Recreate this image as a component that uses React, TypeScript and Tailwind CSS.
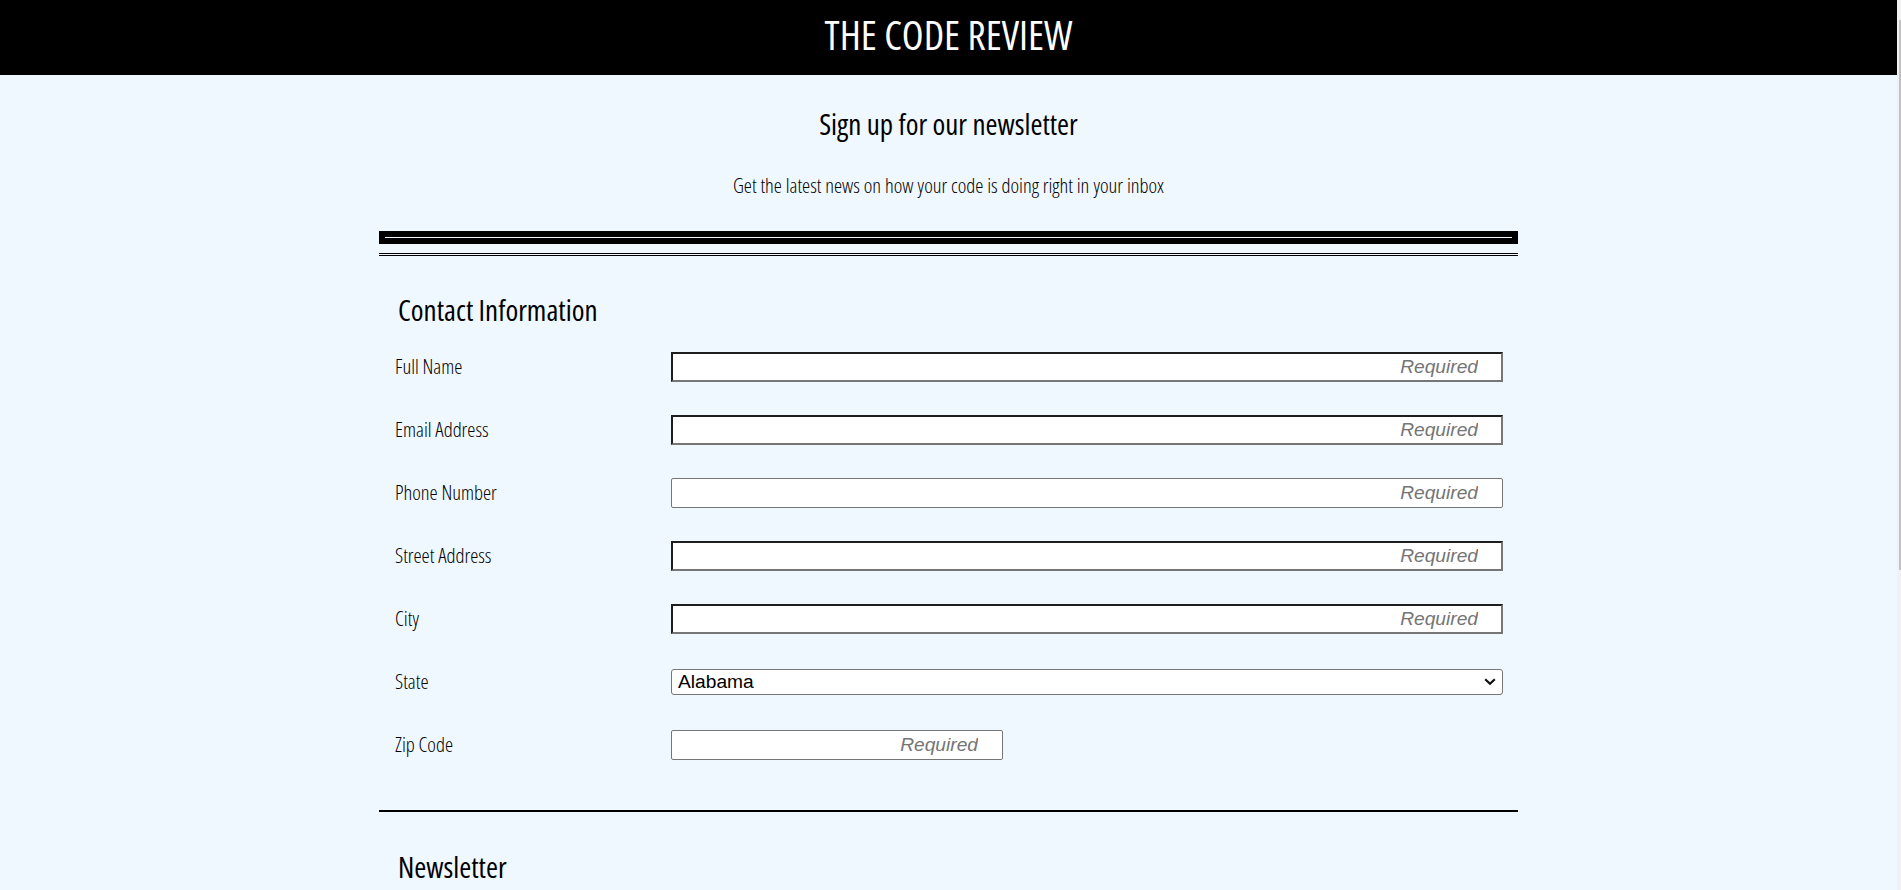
import type { ReactNode } from "react";

const condensed = "font-['Open_Sans',sans-serif] [font-stretch:75%]";

type Field = {
  label: string;
  kind: "strict" | "soft" | "select" | "zip";
};

const fields: Field[] = [
  { label: "Full Name", kind: "strict" },
  { label: "Email Address", kind: "strict" },
  { label: "Phone Number", kind: "soft" },
  { label: "Street Address", kind: "strict" },
  { label: "City", kind: "strict" },
  { label: "State", kind: "select" },
  { label: "Zip Code", kind: "zip" },
];

const states = ["Alabama", "Alaska", "Arizona", "Arkansas", "California", "Colorado"];

function Row({ label, children }: { label: string; children: ReactNode }) {
  return (
    <div className="flex h-[63px] items-center">
      <label className={`${condensed} w-[292px] shrink-0 pl-[16px] text-[20.5px] font-light text-black`}>
        {label}
      </label>
      <div className="w-[832px]">{children}</div>
    </div>
  );
}

function FieldInput({ kind }: { kind: Field["kind"] }) {
  const base =
    "h-[30px] bg-white font-['Liberation_Sans',Arial,sans-serif] text-[19.2px] text-right text-black outline-none placeholder:italic placeholder:text-[#757575]";

  if (kind === "select") {
    return (
      <div className="relative">
        <select className="h-[26px] w-full appearance-none rounded-[3px] border border-[#767676] bg-white pl-[6px] font-['Liberation_Sans',Arial,sans-serif] text-[19.2px] leading-[24px] text-black">
          {states.map((s) => (
            <option key={s}>{s}</option>
          ))}
        </select>
        <svg
          className="pointer-events-none absolute right-[7px] top-[9px]"
          width="12"
          height="8"
          viewBox="0 0 12 8"
        >
          <path d="M1.2 1.2 L6 5.8 L10.8 1.2" fill="none" stroke="#111" strokeWidth="2.2" />
        </svg>
      </div>
    );
  }

  if (kind === "strict") {
    return (
      <input
        required
        placeholder="Required"
        className={`${base} w-full border-2 border-t-[#1e1e1e] border-l-[#1e1e1e] border-r-[#767676] border-b-[#767676] pr-[23px]`}
      />
    );
  }

  return (
    <input
      placeholder="Required"
      className={`${base} ${kind === "zip" ? "w-[332px]" : "w-full"} rounded-[2px] border border-[#767676] pr-[24px]`}
    />
  );
}

export default function App() {
  return (
    <div className="flex h-[890px] overflow-hidden bg-[#f0f8ff]">
      <main className="min-w-0 flex-1">
        <header className="h-[75px] bg-black text-center">
          <h1 className={`${condensed} text-[40px] leading-[69px] font-normal text-white`}>
            THE CODE REVIEW
          </h1>
        </header>

        <h2 className={`${condensed} mt-[29px] text-center text-[29px] leading-[40px] font-normal text-black`}>
          Sign up for our newsletter
        </h2>
        <p className={`${condensed} mt-[29px] text-center text-[20.5px] leading-[24px] font-light text-black`}>
          Get the latest news on how your code is doing right in your inbox
        </p>

        <form className="mx-auto mt-[34px] w-[1139px]">
          <div className="h-[13px] border-[6px] border-black" />
          <div className="mt-[9px] h-[3px] border-y border-black" />

          <section>
            <h3 className={`${condensed} mt-[36px] pl-[19px] text-[29px] leading-[36px] font-normal text-black`}>
              Contact Information
            </h3>
            <div className="mt-[7px]">
              {fields.map((f) => (
                <Row key={f.label} label={f.label}>
                  <FieldInput kind={f.kind} />
                </Row>
              ))}
            </div>
          </section>

          <div className="mt-[34px] h-[2px] bg-black" />

          <section>
            <h3 className={`${condensed} mt-[37px] pl-[19px] text-[29px] leading-[36px] font-normal text-black`}>
              Newsletter
            </h3>
          </section>
        </form>
      </main>

      <div className="w-[4px] shrink-0 bg-[#f1f1f1] pt-[20px]">
        <div className="ml-[2px] h-[550px] w-[2px] bg-[#c1c1c1]" />
      </div>
    </div>
  );
}
